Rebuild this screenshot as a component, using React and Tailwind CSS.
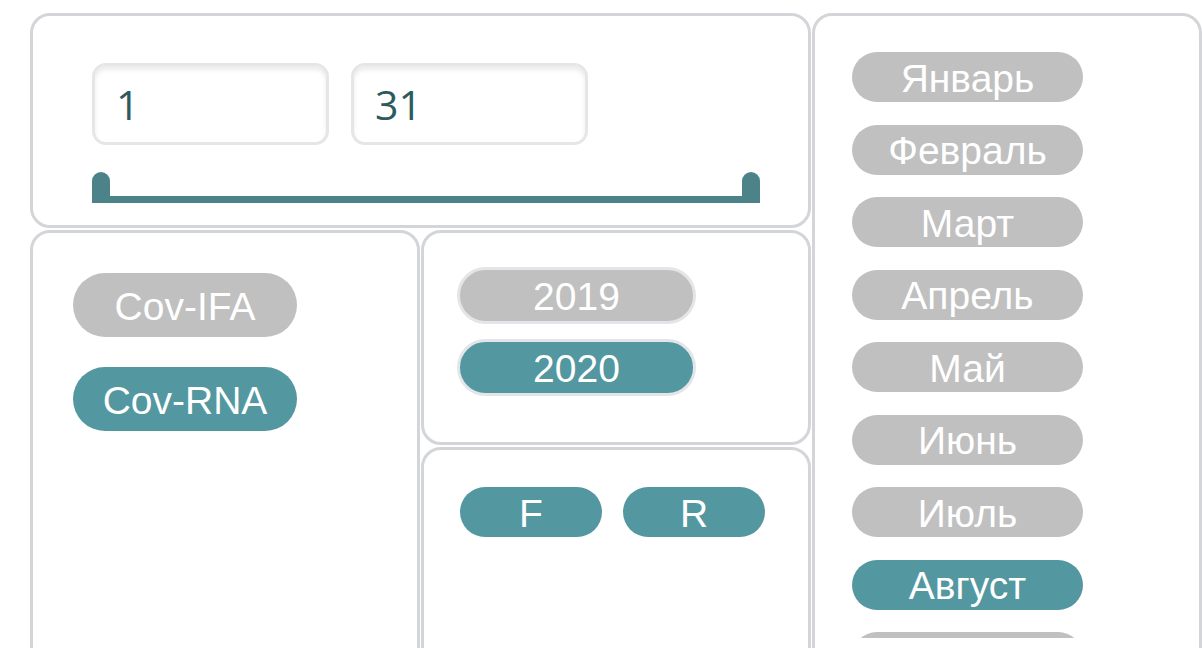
const MONTHS = ['Январь', 'Февраль', 'Март', 'Апрель', 'Май', 'Июнь', 'Июль', 'Август'];

const PANEL = 'rounded-[20px] border-[3px] border-[#d4d5d8] bg-white';
const PILL = 'flex items-center justify-center rounded-full text-[39px] leading-none text-white';

function Pill({ active, className = '', children }) {
  return (
    <div className={`${PILL} ${active ? 'bg-[#5397a0]' : 'bg-[#c0c0c0]'} ${className}`}>
      <span className="pt-[2px]">{children}</span>
    </div>
  );
}

function DayInput({ value }) {
  return (
    <div className="flex h-[82px] w-[237px] items-center rounded-[14px] border-[3px] border-[#e6e6e6] bg-white pl-[21px] shadow-[inset_0_4px_4px_rgba(0,0,0,0.08)]">
      <span className="text-[41px] leading-none text-[#2d5a5d]" style={{ fontFamily: '"Open Sans", sans-serif' }}>
        {value}
      </span>
    </div>
  );
}

export default function App() {
  return (
    <div className="min-h-[648px] overflow-hidden bg-white pl-[30px] pt-[13px]" style={{ fontFamily: '"Liberation Sans", Arial, sans-serif' }}>
      <div className="grid grid-cols-[390px_390px_390px] grid-rows-[215px_215px_230px] gap-x-[1px] gap-y-[2px]">
        {/* day range */}
        <div className={`${PANEL} col-span-2 pl-[59px] pt-[47px]`}>
          <div className="flex gap-[22px]">
            <DayInput value="1" />
            <DayInput value="31" />
          </div>
          <div className="mt-[27px] flex h-[31px] w-[668px] items-end">
            <div className="h-[31px] w-[18px] rounded-t-[9px] bg-[#4b8389]" />
            <div className="h-[7px] flex-1 bg-[#4b8389]" />
            <div className="h-[31px] w-[18px] rounded-t-[9px] bg-[#4b8389]" />
          </div>
        </div>

        <div className={`${PANEL} row-span-3 pl-[37px] pt-[36px]`}>
          <div className="flex h-[586px] flex-col gap-[22.5px] overflow-hidden">
            {MONTHS.map((m) => (
              <Pill key={m} active={m === 'Август'} className="h-[50px] w-[231px] shrink-0">
                {m}
              </Pill>
            ))}
            <div className="h-[50px] w-[231px] shrink-0 rounded-full bg-[#c0c0c0]" />
          </div>
        </div>

        {/* test type */}
        <div className={`${PANEL} row-span-2 flex flex-col gap-[30px] pl-[40px] pt-[40px]`}>
          <Pill className="h-[64px] w-[224px]">Cov-IFA</Pill>
          <Pill active className="h-[64px] w-[224px]">Cov-RNA</Pill>
        </div>

        {/* years */}
        <div className={`${PANEL} flex flex-col gap-[15px] pl-[33px] pt-[34px]`}>
          {['2019', '2020'].map((y) => (
            <Pill key={y} active={y === '2020'} className="h-[57px] w-[239px] border-[3px] border-[#e3e5e8]">
              {y}
            </Pill>
          ))}
        </div>

        {/* sex */}
        <div className={`${PANEL} flex gap-[21px] pl-[36px] pt-[37px]`}>
          <Pill active className="h-[50px] w-[142px]">F</Pill>
          <Pill active className="h-[50px] w-[142px]">R</Pill>
        </div>
      </div>
    </div>
  );
}
